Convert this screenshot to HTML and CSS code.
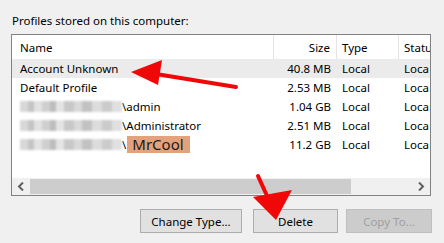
FILE: index.html
```html
<!DOCTYPE html>
<html lang="en">
<head>
  <meta charset="UTF-8" />
  <title>User Profiles</title>
  <link rel="stylesheet" href="styles.css">
</head>
<body>
  <div class="dialog">
    <div class="label">Profiles stored on this computer:</div>

    <div class="listbox">
      <div class="row header">
        <div class="cell name">Name</div>
        <div class="cell size">Size</div>
        <div class="cell type">Type</div>
        <div class="cell status">Statu</div>
      </div>
      <div class="row selected">
        <div class="cell name">Account Unknown</div>
        <div class="cell size">40.8 MB</div>
        <div class="cell type">Local</div>
        <div class="cell status">Loca</div>
      </div>
      <div class="row">
        <div class="cell name">Default Profile</div>
        <div class="cell size">2.53 MB</div>
        <div class="cell type">Local</div>
        <div class="cell status">Loca</div>
      </div>
      <div class="row">
        <div class="cell name"><span class="blur"></span>\admin</div>
        <div class="cell size">1.04 GB</div>
        <div class="cell type">Local</div>
        <div class="cell status">Loca</div>
      </div>
      <div class="row">
        <div class="cell name"><span class="blur"></span>\Administrator</div>
        <div class="cell size">2.51 MB</div>
        <div class="cell type">Local</div>
        <div class="cell status">Loca</div>
      </div>
      <div class="row">
        <div class="cell name"><span class="blur"></span>\<span class="tag">MrCool</span></div>
        <div class="cell size">11.2 GB</div>
        <div class="cell type">Local</div>
        <div class="cell status">Loca</div>
      </div>

      <div class="filler"></div>

      <div class="hscroll">
        <div class="arrow">
          <svg width="8" height="9" viewBox="0 0 8 9"><path d="M6 0.5 L2 4.5 L6 8.5" fill="none" stroke="#606060" stroke-width="2"/></svg>
        </div>
        <div class="thumb"></div>
        <div class="track"></div>
        <div class="arrow">
          <svg width="8" height="9" viewBox="0 0 8 9"><path d="M2 0.5 L6 4.5 L2 8.5" fill="none" stroke="#606060" stroke-width="2"/></svg>
        </div>
      </div>
    </div>

    <div class="buttons">
      <button class="btn change">Change Type...</button>
      <button class="btn delete">Delete</button>
      <button class="btn copy" disabled>Copy To...</button>
    </div>
  </div>

  <svg class="annot" width="444" height="243" viewBox="0 0 444 243">
    <line x1="236" y1="87" x2="156" y2="74" stroke="#f00808" stroke-width="4" stroke-linecap="round"/>
    <polygon points="131,72 162,60 158,85" fill="#f00808"/>
    <line x1="258" y1="176" x2="268" y2="198" stroke="#f00808" stroke-width="4" stroke-linecap="round"/>
    <polygon points="276,220 253,197 292,190" fill="#f00808"/>
  </svg>
</body>
</html>
```

FILE: styles.css
```css
* {
  box-sizing: border-box;
  margin: 0;
  padding: 0;
}

body {
  width: 444px;
  height: 243px;
  background: #f0f0f0;
  font-family: 'Noto Sans', 'Open Sans', sans-serif;
  font-size: 11.5px;
  color: #000;
  overflow: hidden;
  position: relative;
}

.dialog {
  padding: 12px 13px 0 11px;
}

.label {
  height: 22px;
  line-height: 17px;
  padding-left: 1px;
}

.listbox {
  width: 420px;
  height: 162px;
  border: 1px solid #828282;
  background: #fff;
  display: flex;
  flex-direction: column;
  overflow: hidden;
}

.row {
  display: grid;
  grid-template-columns: 262px 63px 62px 31px;
  height: 19px;
  line-height: 19px;
  white-space: nowrap;
}

.row.header {
  height: 24px;
  line-height: 25px;
}

.row.header .cell {
  border-right: 1px solid #e5e5e5;
}

.row.header .cell.status {
  border-right: none;
}

.row.selected {
  background: #ebebeb;
}

.cell {
  overflow: hidden;
}

.cell.name {
  padding-left: 8px;
  display: flex;
  align-items: center;
}

.cell.size {
  text-align: right;
  padding-right: 6px;
}

.cell.type {
  padding-left: 5px;
}

.cell.status {
  padding-left: 5px;
}

.blur {
  display: inline-block;
  width: 102px;
  height: 11px;
  background:
    linear-gradient(90deg,
      #d8d8d8 0 8px, #c4c4c4 8px 14px, #e2e2e2 14px 22px, #cfcfcf 22px 30px,
      #bdbdbd 30px 36px, #e4e4e4 36px 44px, #c8c8c8 44px 54px, #d9d9d9 54px 62px,
      #c2c2c2 62px 72px, #dcdcdc 72px 82px, #cbcbcb 82px 92px, #e0e0e0 92px 102px);
  filter: blur(0.8px);
}

.tag {
  display: inline-block;
  background: #e3a27c;
  font-size: 15px;
  line-height: 17px;
  padding: 0 6px 0 5px;
  margin-left: 1px;
  color: #1a1a1a;
}

.filler {
  flex: 1;
}

.hscroll {
  display: flex;
  height: 17px;
  background: #f0f0f0;
}

.hscroll .arrow {
  width: 18px;
  display: flex;
  align-items: center;
  justify-content: center;
}

.hscroll .thumb {
  width: 321px;
  margin: 1px 0;
  background: #cdcdcd;
}

.hscroll .track {
  flex: 1;
}

.buttons {
  display: flex;
  justify-content: flex-end;
  margin-top: 13px;
  margin-right: -1px;
}

.btn {
  height: 24px;
  font-family: inherit;
  font-size: 11.5px;
  color: #000;
  background: #e1e1e1;
  border: 1px solid #adadad;
}

.btn.change {
  width: 102px;
  margin-right: 11px;
}

.btn.delete {
  width: 85px;
  margin-right: 8px;
}

.btn.copy {
  width: 86px;
}

.btn:disabled {
  background: #cccccc;
  border-color: #bfbfbf;
  color: #a0a0a0;
}

.annot {
  position: absolute;
  left: 0;
  top: 0;
  pointer-events: none;
}
```
